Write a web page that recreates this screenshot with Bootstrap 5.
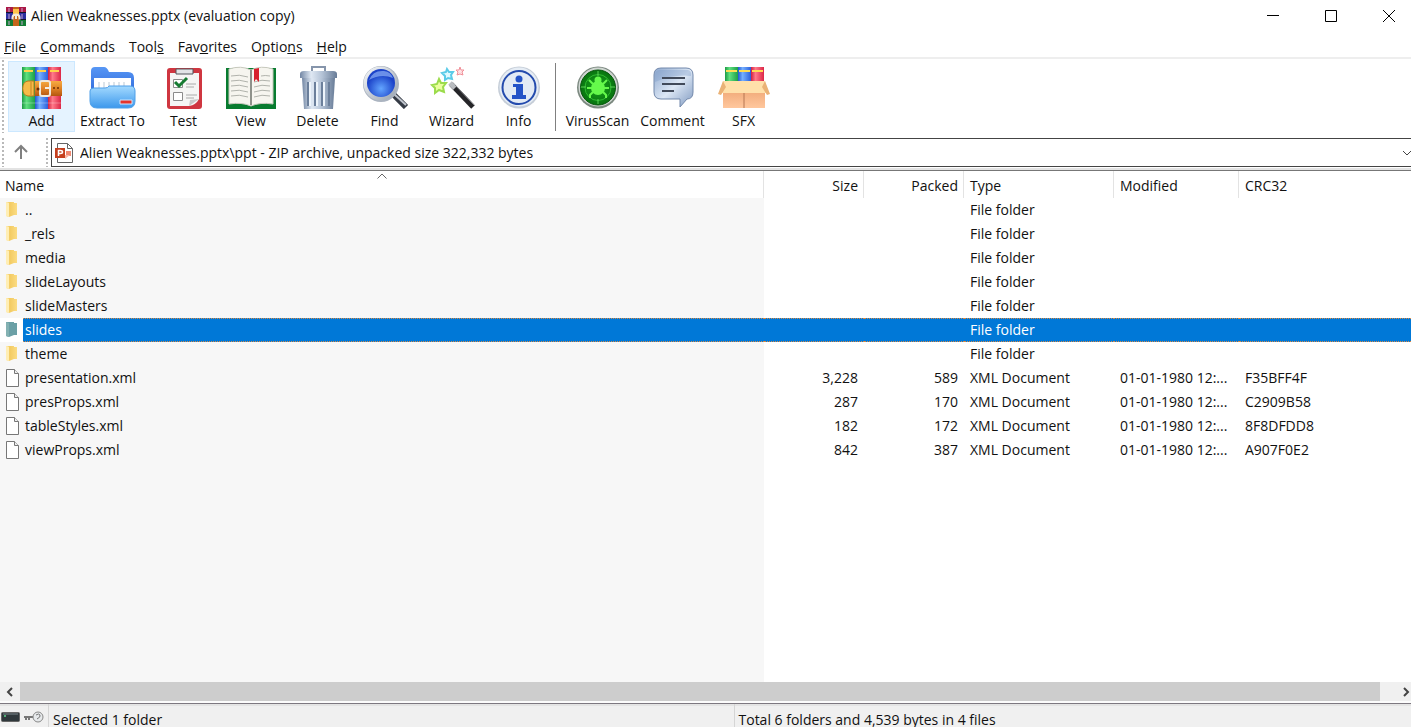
<!DOCTYPE html>
<html lang="en">
<head>
<meta charset="utf-8">
<meta name="viewport" content="width=device-width, initial-scale=1">
<title>Alien Weaknesses.pptx (evaluation copy)</title>
<link href="https://cdn.jsdelivr.net/npm/bootstrap@5.3.0/dist/css/bootstrap.min.css" rel="stylesheet">
<style>
body{font-family:"Open Sans","Noto Sans",sans-serif;font-size:14px;line-height:20px;color:#111}
svg{display:block;flex:none}
button{border:0;background:transparent;padding:0;color:inherit}
.titlebar{height:32px;padding-left:6px;gap:5px}
.winbtns{margin-right:-7px}
.winbtn{width:58px;height:30px;display:flex;align-items:center;justify-content:center}
.menubar{height:27px;padding:5px 4px 0;gap:14px;border-bottom:2px solid #eee}
.menubar a{color:#111;text-decoration:none}
.grip{width:2px;flex:none;background:repeating-linear-gradient(#b9b9b9 0 2px,transparent 2px 4px)}
.toolbar{height:76px;padding:1px 0 2px 2px}
.tools{padding:1px 0 1px 4px}
.tool{width:67px;height:71px;padding-top:4px;border:1px solid transparent;display:flex;flex-direction:column;align-items:center;gap:2px;white-space:nowrap}
.tool svg{width:52px;height:43px}
.tool.wide{width:75px}
.tool.hot{background:#e5f3ff;border-color:#cce8ff}
.toolsep{width:1px;margin:2px 4px 1px 3px;background:#808080}
.addressrow{height:35px;padding:3px 0 1px 2px;border-bottom:2px solid #e3e3e3}
.upbtn{width:34px;height:27px;display:flex;justify-content:center;align-items:center;margin-right:8px}
.address{height:29px;margin-left:3px;border:1px solid #444;border-right:0;padding-left:3px;gap:7px}
.address input{border:0;outline:0;padding:0;background:none;color:#111;min-width:0}
.filearea{border-top:1px solid #777;min-height:0;overflow:hidden}
.filetable{table-layout:fixed;width:100%;border-collapse:separate;border-spacing:0}
.filetable th{font-weight:400}
.filetable thead th{height:27px;padding:2px 5px 0 6px;border-right:1px solid #e3e3e3;position:relative}
.filetable thead th:first-child{padding-left:5px}
.filetable thead th:last-child{border-right:0}
.filetable td{height:24px;padding:1px 6px;white-space:nowrap;overflow:hidden}
.filetable tbody th{height:24px;padding:0;background:#f7f7f7}
.filetable .caret{position:absolute;left:50%;top:2px;margin-left:-5px}
.sortedcol{background:#f7f7f7;margin-right:647px}
.fname{display:flex;height:24px}
.ficon{width:23px;flex:none;padding:3px 0 0 5px}
.flabel{flex:1;padding:2px 2px 0;line-height:20px}
.picked td,.picked .flabel{background:#0078d7;color:#fff;border-top:1px dotted #d88a45;border-bottom:1px dotted #d88a45}
.picked td{padding:0 6px}
.picked .flabel{padding-top:1px}
.picked .ficon{background:#fff}
.c-num{width:100px}.c-type{width:150px}.c-date{width:125px}.c-crc{width:172px}
.scroller{height:21px;background:#f0f0f0;border-bottom:2px solid #fcfcfc}
.scroller button{width:20px;display:flex;align-items:center;justify-content:center}
.scroller .edge{width:11px}
.thumb{background:#cdcdcd;margin-right:20px}
.status{height:24px;line-height:14px;border-top:1px solid #7d7880;background:#f0f0f0;box-shadow:inset 0 2px #e4e4e4}
.status .cell{padding:9px 4px 0;border-left:1px solid #d5d5d5;white-space:nowrap}
.status .selinfo{flex:0 0 calc(50% - 20px)}
.stateicons{width:48px;padding:7px 0 0 1px;gap:3px}
</style>
</head>
<body class="bg-white">
<svg width="0" height="0" class="position-absolute" aria-hidden="true">
<defs>
<linearGradient id="gGreen"><stop offset="0" stop-color="#1d9a45"/><stop offset=".35" stop-color="#5fe07e"/><stop offset="1" stop-color="#1d9f48"/></linearGradient>
<linearGradient id="gBlue"><stop offset="0" stop-color="#2257cf"/><stop offset=".35" stop-color="#75b0ff"/><stop offset="1" stop-color="#2b60dc"/></linearGradient>
<linearGradient id="gRed"><stop offset="0" stop-color="#d0203f"/><stop offset=".35" stop-color="#ff7a8a"/><stop offset="1" stop-color="#dc2747"/></linearGradient>
<linearGradient id="gBelt" x2="0" y2="1"><stop offset="0" stop-color="#f6ac42"/><stop offset=".5" stop-color="#e08226"/><stop offset="1" stop-color="#b4560f"/></linearGradient>
<linearGradient id="gFold" x2="0" y2="1"><stop offset="0" stop-color="#a4daff"/><stop offset="1" stop-color="#3c98ec"/></linearGradient>
<linearGradient id="gFoldB" x2="0" y2="1"><stop offset="0" stop-color="#5797f5"/><stop offset="1" stop-color="#2a62d6"/></linearGradient>
<linearGradient id="gSteel"><stop offset="0" stop-color="#7387a4"/><stop offset=".3" stop-color="#dfe8f3"/><stop offset=".6" stop-color="#b3c2d6"/><stop offset="1" stop-color="#687c97"/></linearGradient>
<linearGradient id="gSilver" x2="1" y2="1"><stop offset="0" stop-color="#f7f9fb"/><stop offset="1" stop-color="#98a2ae"/></linearGradient>
<radialGradient id="gLens" cy=".7"><stop offset="0" stop-color="#63a5ff"/><stop offset="1" stop-color="#1c43c9"/></radialGradient>
<radialGradient id="gScan"><stop offset="0" stop-color="#18a51b"/><stop offset="1" stop-color="#087310"/></radialGradient>
<linearGradient id="gTalk" x2="1" y2="1"><stop offset="0" stop-color="#8fa9cf"/><stop offset=".5" stop-color="#dce7f5"/><stop offset="1" stop-color="#7f99c0"/></linearGradient>
<linearGradient id="gBox" x2="0" y2="1"><stop offset="0" stop-color="#e99a66"/><stop offset="1" stop-color="#ffc79d"/></linearGradient>
<linearGradient id="gYel"><stop offset="0" stop-color="#fde69b"/><stop offset=".35" stop-color="#f3cb62"/><stop offset="1" stop-color="#fbdc83"/></linearGradient>
<symbol id="folder" viewBox="0 0 13 16"><path d="M1 1h8v1h3v12H9l-5 2-3-1z" fill="url(#gYel)"/><path d="M1 1l3 1v14l-3-1z" fill="#ffeeb4"/></symbol>
<symbol id="folderSel" viewBox="0 0 13 16"><path d="M1 1h8v1h3v12H9l-5 2-3-1z" fill="#6ba0a6"/><path d="M1 1l3 1v14l-3-1z" fill="#83b1b2"/></symbol>
<symbol id="page" viewBox="0 0 15 18"><path d="M1.500 .5h8l4 4v13h-12z" fill="#fff" stroke="#777"/><path d="M9.500 .5v4h4" fill="#eee" stroke="#777"/></symbol>
</defs>
</svg>
<main class="vh-100 d-flex flex-column overflow-hidden">
<header class="titlebar d-flex align-items-center">
<svg width="20" height="19" viewBox="0 0 20 19"><path d="M0 0h20v6H0z" fill="#aa1846"/><path d="M0 6h20v7H0z" fill="#2c2fa0"/><path d="M0 13h20v6H0z" fill="#147d35"/><path d="M0 5.500h20M0 12.500h20" stroke="#151329"/><path d="M3 1v4M3 7v5M3 14v4M16 1v4M16 7v5M16 14v4" stroke="#c8a4d0"/><path d="M7 0h6v19H7z" fill="#c4661b"/><path d="M7 2h6v6H7z" fill="#ffc34c"/><path d="M6.500 12.500v-2c0-2 1-3 3.500-3s3.500 1 3.500 3v2M10 8v4" fill="none" stroke="#f5ead8" stroke-width="2"/></svg>
<span class="flex-fill">Alien Weaknesses.pptx (evaluation copy)</span>
<nav class="winbtns d-flex" aria-label="Window">
<button class="winbtn" aria-label="Minimize"><svg width="12" height="12"><path d="M0 5.500h12" stroke="#000"/></svg></button>
<button class="winbtn" aria-label="Maximize"><svg width="12" height="12"><path d="M.5 .5h11v11H.5z" fill="none" stroke="#000"/></svg></button>
<button class="winbtn" aria-label="Close"><svg width="12" height="12"><path d="M0 0l12 12M12 0L0 12" stroke="#000"/></svg></button>
</nav>
</header>
<nav class="menubar d-flex" aria-label="Menu">
<a href="#"><u>F</u>ile</a><a href="#"><u>C</u>ommands</a><a href="#">Tool<u>s</u></a><a href="#">Fav<u>o</u>rites</a><a href="#">Optio<u>n</u>s</a><a href="#"><u>H</u>elp</a>
</nav>
<section class="toolbar d-flex" aria-label="Tools">
<span class="grip"></span>
<div class="tools d-flex">
<button class="tool hot"><svg viewBox="0 0 52 43"><path d="M6 1h13v42H6z" fill="url(#gGreen)"/><path d="M19 1h13v42H19z" fill="url(#gBlue)"/><path d="M32 1h13v42H32z" fill="url(#gRed)"/><path d="M8 4h9v2H8zM21 4h9v2h-9zM34 4h9v2h-9z" fill="#ffd24a"/><path d="M6 37h39" stroke="#fff" stroke-opacity=".3"/><path d="M19 15h27v15H19z" fill="url(#gBelt)"/><path d="M18 15h-6c-7 0-7 15 0 15h6z" fill="#f6bc48" stroke="#b9771c"/><path d="M15 16v13" stroke="#c68224"/><rect x="24" y="15" width="10" height="15" rx="2" fill="none" stroke="#efe9dc" stroke-width="2"/><path d="M29 22h6" stroke="#f5efe4" stroke-width="2"/><circle cx="22" cy="23" r="1.500" fill="#6c2e05"/><circle cx="38" cy="22" r="1" fill="#6c2e05"/><circle cx="42" cy="22" r="1" fill="#6c2e05"/></svg>Add</button>
<button class="tool wide"><svg viewBox="0 0 52 43"><path d="M4 5q0-4 4-4h9q3 0 5 5h19q6 0 6 6v20H4z" fill="url(#gFoldB)"/><path d="M7 12h37v16H7z" fill="#fff"/><path d="M12 16v8M17 16v8M22 16v8M27 16v8M32 16v8M37 16v8" stroke="#dde4ea" stroke-width="2"/><path d="M3 25q0-3 4-3h11q3 0 4-2h21q5 0 5 5v10q0 7-7 7H10q-7 0-7-7z" fill="url(#gFold)" stroke="#4e9fe8"/><path d="M33 34h12v4H33z" fill="#e5342b" stroke="#c9e4ff"/></svg>Extract To</button>
<button class="tool"><svg viewBox="0 0 52 43"><rect x="9" y="2" width="35" height="41" rx="3" fill="#cf3640"/><path d="M12 7h29v26q-3 6-10 7H12z" fill="#f5f5f4"/><path d="M41 33l-10 7 1-6z" fill="#c8c8c8"/><path d="M18 3v5h17V3z" fill="#e2e4e7" stroke="#52555a"/><path d="M15.500 13.500h9v8h-9zM15.500 26.500h9v8h-9z" fill="#fff" stroke="#8b8b8b"/><path d="M17 16l4 4 8-8" fill="none" stroke="#167b32" stroke-width="3"/><path d="M28 18h10M28 21h8M28 29h11M28 32h8" stroke="#aaa"/></svg>Test</button>
<button class="tool"><svg viewBox="0 0 52 43"><path d="M1 2h50v41H1z" fill="#087b2f"/><path d="M4 3q12-4 22 1 10-5 22-1v35q-13-2-22 2-9-4-22-2z" fill="#f6f5ef" stroke="#c7c9bd"/><path d="M26 4v35" stroke="#8e918a" stroke-width="2"/><path d="M6 10q8-2 17 1M6 15q8-2 17 1M6 20q8-2 17 1M6 25q8-2 17 1M6 30q8-2 17 1M36 10q4-1 9 0M29 16q8-3 16-1M29 21q8-3 16-1M29 26q8-3 16-1M29 31q8-3 16-1" fill="none" stroke="#b1b3ac"/><path d="M29 3l5-1v14l-3-3-2 3z" fill="#d7202d"/></svg>View</button>
<button class="tool"><svg viewBox="0 0 52 43"><path d="M20 5V1h13v4" fill="none" stroke="#8695ab" stroke-width="2"/><path d="M10 12h33l-2 31H12z" fill="url(#gSteel)"/><path d="M16 16v24M23 16v24M30 16v24M37 16v24" stroke="#6b7f9b" stroke-width="2"/><path d="M18 16v24M25 16v24M32 16v24" stroke="#edf4fb" stroke-width="2"/><path d="M8 8q0-3 4-3h29q4 0 4 3v4H8z" fill="url(#gSteel)"/></svg>Delete</button>
<button class="tool"><svg viewBox="0 0 52 43"><path d="M35 29l12 12" stroke="#353b45" stroke-width="6"/><path d="M35 28l12 11" stroke="#c1c6ce" stroke-width="2"/><circle cx="22" cy="18" r="18" fill="#aab3c0"/><circle cx="21.500" cy="17.500" r="17" fill="url(#gSilver)"/><circle cx="22" cy="17" r="14" fill="url(#gLens)"/><path d="M10 14q4-10 15-9 7 1 9 7-12-5-24 2" fill="#9fc3ff" opacity=".6"/></svg>Find</button>
<button class="tool"><svg viewBox="0 0 52 43"><path d="M25 18l22 23" stroke="#252528" stroke-width="5"/><path d="M24 17l5 5" stroke="#b9bcc0" stroke-width="5"/><path d="M29 19l19 20" stroke="#85878b"/><path d="M13 13l2 4 5 0-3 4 1 5-5-2-4 3 0-5-3-3 5-1z" fill="#eaff9e" stroke="#9cdc4c" stroke-width="2"/><path d="M21 3l2 3h4l-2 3 1 4-4-1-3 2v-4l-3-3 4-1z" fill="#e0f9ff" stroke="#5ccbe8" stroke-width="2"/><path d="M34 1l1 3 3 0-2 2 1 3-3-1-3 1 1-3-2-2h3z" fill="#ffe2e5" stroke="#f09099"/></svg>Wizard</button>
<button class="tool"><svg viewBox="0 0 52 43"><circle cx="26" cy="21.500" r="21" fill="#c6ced8"/><circle cx="26" cy="21" r="19.500" fill="#e6edf5"/><circle cx="26" cy="21.500" r="16.500" fill="#e3ebf5" stroke="#244bad" stroke-width="2"/><circle cx="26" cy="13" r="3.500" fill="#2453c7"/><path d="M20 18h10v11h3v4H19v-4h4v-8h-3z" fill="#2453c7"/></svg>Info</button>
<span class="toolsep"></span>
<button class="tool wide"><svg viewBox="0 0 52 43"><circle cx="26" cy="21.500" r="21" fill="#7c8980"/><circle cx="26" cy="21" r="19.500" fill="#d0d6d2"/><circle cx="26" cy="21.500" r="17.500" fill="url(#gScan)" stroke="#07570d"/><circle cx="26" cy="21.500" r="13" fill="none" stroke="#2ebb30"/><path d="M26 5v5M26 33v5M9 21h5M38 21h5" stroke="#5cd159"/><ellipse cx="26" cy="22" rx="7" ry="7" fill="#65f94b"/><circle cx="26" cy="14" r="3.500" fill="#65f94b"/><path d="M21 18l-4-4M31 18l4-4M20 22h-5M32 22h5M21 26l-3 3v3M31 26l3 3v3" fill="none" stroke="#65f94b" stroke-width="2"/></svg>VirusScan</button>
<button class="tool wide"><svg viewBox="0 0 52 43"><path d="M14 2h25q7 0 7 7v17q0 7-6 7l-7 8v-8H14q-7 0-7-7V9q0-7 7-7z" fill="url(#gTalk)" stroke="#7389ac"/><path d="M12 4h29q4 1 3 6-18-2-36 6V9q0-4 4-5" fill="#7897c6" opacity=".35"/><path d="M15 12h23M15 18h23M15 25h12" stroke="#414a5a" stroke-width="2"/></svg>Comment</button>
<button class="tool"><svg viewBox="0 0 52 43"><path d="M7 1h13v16H7z" fill="url(#gGreen)"/><path d="M20 1h13v16H20z" fill="url(#gBlue)"/><path d="M33 1h13v16H33z" fill="url(#gRed)"/><path d="M8 4h11v2H8zM21 4h11v2H21zM34 4h11v2H34z" fill="#ffdc52"/><path d="M5 15h42v27H5z" fill="url(#gBox)"/><path d="M5 15h42l2 12H3z" fill="#ffe0aa"/><path d="M5 15L0 28l3 1 5-8zM47 15l5 13-3 1-5-8z" fill="#eab276"/><path d="M26 27v15" stroke="#b67753"/></svg>SFX</button>
</div>
</section>
<section class="addressrow d-flex" aria-label="Address">
<span class="grip"></span>
<button class="upbtn" aria-label="Up one level"><svg width="16" height="16"><path d="M8 15V2M2 8l6-6 6 6" fill="none" stroke="#808080" stroke-width="2"/></svg></button>
<span class="grip"></span>
<div class="address d-flex align-items-center flex-fill">
<svg width="18" height="20" viewBox="0 0 18 20"><path d="M2.500 .5h10l5 5v14h-15z" fill="#fff" stroke="#666"/><path d="M12.500 .5v5h5" fill="none" stroke="#666"/><path d="M11 8h5v5h-5z" fill="#f08a73"/><path d="M10 12h5l-5 4z" fill="#f9b8a7"/><path d="M0 5h10v10H0z" fill="#c5401f"/><path d="M3.500 13V7.500h2q2 0 2 1.500t-2 1.500h-2" fill="none" stroke="#fff" stroke-width="1.500"/></svg>
<input class="flex-fill" type="text" aria-label="Archive path" value="Alien Weaknesses.pptx\ppt - ZIP archive, unpacked size 322,332 bytes">
<button aria-label="Show paths"><svg width="8" height="8"><path d="M0 2l4 4 4-4" fill="none" stroke="#444"/></svg></button>
</div>
</section>
<section class="filearea flex-fill d-flex flex-column" aria-label="Files">
<table class="filetable">
<colgroup><col><col class="c-num"><col class="c-num"><col class="c-type"><col class="c-date"><col class="c-crc"></colgroup>
<thead><tr><th scope="col">Name<svg class="caret" width="10" height="6"><path d="M.5 5.500L5 1l4.500 4.500" fill="none" stroke="#666"/></svg></th><th scope="col" class="text-end">Size</th><th scope="col" class="text-end">Packed</th><th scope="col">Type</th><th scope="col">Modified</th><th scope="col">CRC32</th></tr></thead>
<tbody>
<tr><th scope="row"><div class="fname"><span class="ficon"><svg width="13" height="16"><use href="#folder"/></svg></span><span class="flabel">..</span></div></th><td></td><td></td><td>File folder</td><td></td><td></td></tr>
<tr><th scope="row"><div class="fname"><span class="ficon"><svg width="13" height="16"><use href="#folder"/></svg></span><span class="flabel">_rels</span></div></th><td></td><td></td><td>File folder</td><td></td><td></td></tr>
<tr><th scope="row"><div class="fname"><span class="ficon"><svg width="13" height="16"><use href="#folder"/></svg></span><span class="flabel">media</span></div></th><td></td><td></td><td>File folder</td><td></td><td></td></tr>
<tr><th scope="row"><div class="fname"><span class="ficon"><svg width="13" height="16"><use href="#folder"/></svg></span><span class="flabel">slideLayouts</span></div></th><td></td><td></td><td>File folder</td><td></td><td></td></tr>
<tr><th scope="row"><div class="fname"><span class="ficon"><svg width="13" height="16"><use href="#folder"/></svg></span><span class="flabel">slideMasters</span></div></th><td></td><td></td><td>File folder</td><td></td><td></td></tr>
<tr class="picked"><th scope="row"><div class="fname"><span class="ficon"><svg width="13" height="16"><use href="#folderSel"/></svg></span><span class="flabel">slides</span></div></th><td></td><td></td><td>File folder</td><td></td><td></td></tr>
<tr><th scope="row"><div class="fname"><span class="ficon"><svg width="13" height="16"><use href="#folder"/></svg></span><span class="flabel">theme</span></div></th><td></td><td></td><td>File folder</td><td></td><td></td></tr>
<tr><th scope="row"><div class="fname"><span class="ficon"><svg width="15" height="18"><use href="#page"/></svg></span><span class="flabel">presentation.xml</span></div></th><td class="text-end">3,228</td><td class="text-end">589</td><td>XML Document</td><td>01-01-1980 12:...</td><td>F35BFF4F</td></tr>
<tr><th scope="row"><div class="fname"><span class="ficon"><svg width="15" height="18"><use href="#page"/></svg></span><span class="flabel">presProps.xml</span></div></th><td class="text-end">287</td><td class="text-end">170</td><td>XML Document</td><td>01-01-1980 12:...</td><td>C2909B58</td></tr>
<tr><th scope="row"><div class="fname"><span class="ficon"><svg width="15" height="18"><use href="#page"/></svg></span><span class="flabel">tableStyles.xml</span></div></th><td class="text-end">182</td><td class="text-end">172</td><td>XML Document</td><td>01-01-1980 12:...</td><td>8F8DFDD8</td></tr>
<tr><th scope="row"><div class="fname"><span class="ficon"><svg width="15" height="18"><use href="#page"/></svg></span><span class="flabel">viewProps.xml</span></div></th><td class="text-end">842</td><td class="text-end">387</td><td>XML Document</td><td>01-01-1980 12:...</td><td>A907F0E2</td></tr>
</tbody>
</table>
<div class="sortedcol flex-fill"></div>
</section>
<div class="scroller d-flex">
<button aria-label="Scroll left"><svg width="8" height="10"><path d="M6 1L2 5l4 4" fill="none" stroke="#444" stroke-width="2"/></svg></button>
<div class="thumb flex-fill"></div>
<button class="edge" aria-label="Scroll right"><svg width="8" height="10"><path d="M2 1l4 4-4 4" fill="none" stroke="#444" stroke-width="2"/></svg></button>
</div>
<footer class="status d-flex">
<div class="stateicons d-flex"><svg width="20" height="12"><rect x=".5" y="1.500" width="18" height="9" rx="1" fill="#30383c" stroke="#666"/><path d="M2 3h15" stroke="#7b858a"/><circle cx="4" cy="5" r="1" fill="#5bd48a"/></svg><svg width="20" height="12"><path d="M0 6h10M2 6v3M5 6v3" stroke="#777" stroke-width="2"/><circle cx="14" cy="6" r="5" fill="#e6e9eb" stroke="#888"/><path d="M12 4q3-2 4 0t-3 4" fill="none" stroke="#777"/></svg></div>
<div class="cell selinfo">Selected 1 folder</div>
<div class="cell flex-fill">Total 6 folders and 4,539 bytes in 4 files</div>
</footer>
</main>
<script src="https://cdn.jsdelivr.net/npm/bootstrap@5.3.0/dist/js/bootstrap.bundle.min.js"></script>
</body>
</html>
